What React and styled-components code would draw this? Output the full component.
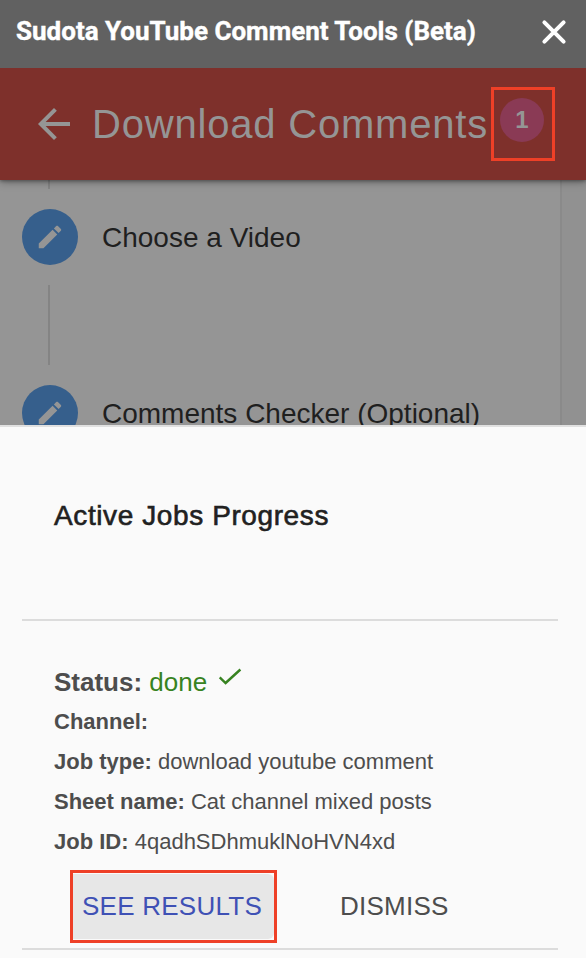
import styled, { createGlobalStyle } from "styled-components";
import { MdArrowBack } from "react-icons/md";

const steps = ["Choose a Video", "Comments Checker (Optional)"];

const details = [
  { label: "Channel:", value: "" },
  { label: "Job type:", value: "download youtube comment" },
  { label: "Sheet name:", value: "Cat channel mixed posts" },
  { label: "Job ID:", value: "4qadhSDhmuklNoHVN4xd" },
];

const Pencil = () => (
  <svg width="30" height="30" viewBox="0 0 24 24" fill="currentColor">
    <path d="M3 17.25V21h3.75L17.81 9.94l-3.75-3.75L3 17.25zM20.71 7.04c.39-.39.39-1.02 0-1.41l-2.34-2.34c-.39-.39-1.02-.39-1.41 0l-1.83 1.83 3.75 3.75 1.83-1.83z" />
  </svg>
);

const App = () => {
  return (
    <Page>
      <GlobalStyle />
      <TitleBar>
        <h1>Sudota YouTube Comment Tools (Beta)</h1>
        <svg width="40" height="40" viewBox="0 0 40 40">
          <path d="M10.4 10.4 29.6 29.6M29.6 10.4 10.4 29.6" />
        </svg>
      </TitleBar>
      <AppBar>
        <MdArrowBack className="icon" />
        <h2>Download Comments</h2>
        <BadgeFrame>
          <Badge>1</Badge>
        </BadgeFrame>
      </AppBar>
      <Content>
        <Stepper>
          <Connector $height={9} />
          {steps.map((step) => (
            <div key={step}>
              <Step>
                <StepIcon>
                  <Pencil />
                </StepIcon>
                <span>{step}</span>
              </Step>
              <Connector $height={80} />
            </div>
          ))}
        </Stepper>
        <Gutter />
      </Content>
      <Sheet>
        <SheetTitle>Active Jobs Progress</SheetTitle>
        <Job>
          <Status>
            <b>Status:</b> <span>done</span>
            <svg width="24" height="18" viewBox="0 0 24 18">
              <path d="M1.7 9.4 7.6 15 22.4 1.5" />
            </svg>
          </Status>
          {details.map(({ label, value }) => (
            <Detail key={label}>
              <b>{label}</b> <span>{value}</span>
            </Detail>
          ))}
          <Actions>
            <ButtonFrame>
              <Button $primary>SEE RESULTS</Button>
            </ButtonFrame>
            <Button>DISMISS</Button>
          </Actions>
        </Job>
      </Sheet>
    </Page>
  );
};

export default App;

const GlobalStyle = createGlobalStyle`
  * {
    box-sizing: border-box;
    margin: 0;
    padding: 0;
  }
  body {
    font-family: "Liberation Sans", Arial, sans-serif;
    background-color: #fafafa;
    overflow: hidden;
  }
`;

const Page = styled.div`
  display: flex;
  flex-direction: column;
  width: 586px;
  height: 958px;
  overflow: hidden;
`;

const TitleBar = styled.header`
  display: flex;
  align-items: flex-start;
  justify-content: space-between;
  flex: 0 0 68px;
  padding: 12px 12px 0 16px;
  background-color: #616161;
  color: #fff;
  z-index: 2;

  h1 {
    font: 700 26px/38px Roboto, sans-serif;
    white-space: nowrap;
    -webkit-text-stroke: 0.4px #fff;
  }
  svg {
    fill: none;
    stroke: #fff;
    stroke-width: 4;
    stroke-linecap: round;
  }
`;

const AppBar = styled.div`
  display: flex;
  align-items: center;
  flex: 0 0 112px;
  padding-left: 30px;
  background-color: #7e302b;
  color: #959595;
  box-shadow: 0 2px 8px rgba(0, 0, 0, 0.35), 0 1px 3px rgba(0, 0, 0, 0.3);
  z-index: 1;

  .icon {
    flex: none;
    font-size: 48px;
  }
  h2 {
    width: 401px;
    padding-left: 14px;
    font-size: 40px;
    font-weight: 400;
    letter-spacing: 0.8px;
    white-space: nowrap;
  }
`;

const BadgeFrame = styled.div`
  flex: none;
  width: 64px;
  height: 74px;
  padding: 8px 0 0 6px;
  margin-left: 12px;
  border: 3px solid #ee4027;
`;

const Badge = styled.div`
  width: 44px;
  height: 44px;
  border-radius: 50%;
  background-color: #8a3a55;
  font: 700 24px/44px "Liberation Sans", Arial, sans-serif;
  text-align: center;
`;

const Content = styled.main`
  display: flex;
  flex: 0 0 245px;
  overflow: hidden;
  background-color: #959595;
`;

const Stepper = styled.div`
  flex: 1;
  padding-left: 22px;
`;

const Connector = styled.div`
  width: 2px;
  height: ${({ $height }) => $height}px;
  margin-left: 26px;
  background-color: #848484;
`;

const Step = styled.div`
  display: flex;
  align-items: center;
  gap: 24px;
  margin: 20px 0;
  color: #1f1f1f;
  font-size: 28px;
  white-space: nowrap;

  span {
    padding-top: 2px;
  }
`;

const StepIcon = styled.div`
  display: flex;
  align-items: center;
  justify-content: center;
  width: 56px;
  height: 56px;
  border-radius: 50%;
  background-color: #365f8c;
  color: #959595;
`;

const Gutter = styled.div`
  width: 26px;
  border-left: 2px solid #8a8a8a;
  background-color: #919191;
`;

const Sheet = styled.section`
  flex: 1;
  padding: 0 28px 0 22px;
  border-top: 2px solid #e0e0e0;
  background-color: #fafafa;
`;

const SheetTitle = styled.h3`
  height: 194px;
  padding: 70px 32px 0;
  border-bottom: 2px solid #dcdcdc;
  color: #212121;
  font-size: 28px;
  font-weight: 400;
  line-height: 38px;
  letter-spacing: 0.6px;
  -webkit-text-stroke: 0.6px #212121;
`;

const Job = styled.div`
  height: 329px;
  padding: 41px 32px 0;
  border-bottom: 2px solid #dcdcdc;
  color: #4d4d4d;
`;

const Status = styled.p`
  font-size: 26px;
  line-height: 40px;

  span {
    color: #378321;
  }
  svg {
    margin: 0 0 5px 11px;
    fill: none;
    stroke: #378321;
    stroke-width: 2.4;
  }
`;

const Detail = styled.p`
  font-size: 22px;
  line-height: 40px;
  white-space: nowrap;
`;

const Actions = styled.div`
  display: flex;
  align-items: center;
  gap: 54px;
  padding: 8px 0 0 16px;
`;

const ButtonFrame = styled.div`
  width: 207px;
  height: 73px;
  padding: 1px 0;
  border: 3px solid #ee4027;

  button {
    width: 201px;
  }
`;

const Button = styled.button`
  height: 65px;
  padding: 0 10px 0 9px;
  border: none;
  border-radius: 0 6px 6px 0;
  background-color: ${({ $primary }) => ($primary ? "#e7e7e7" : "transparent")};
  color: ${({ $primary }) => ($primary ? "#3f51b5" : "#4d4d4d")};
  font: 400 26px "Liberation Sans", Arial, sans-serif;
  letter-spacing: 0.25px;
  text-align: left;
  white-space: nowrap;
`;
